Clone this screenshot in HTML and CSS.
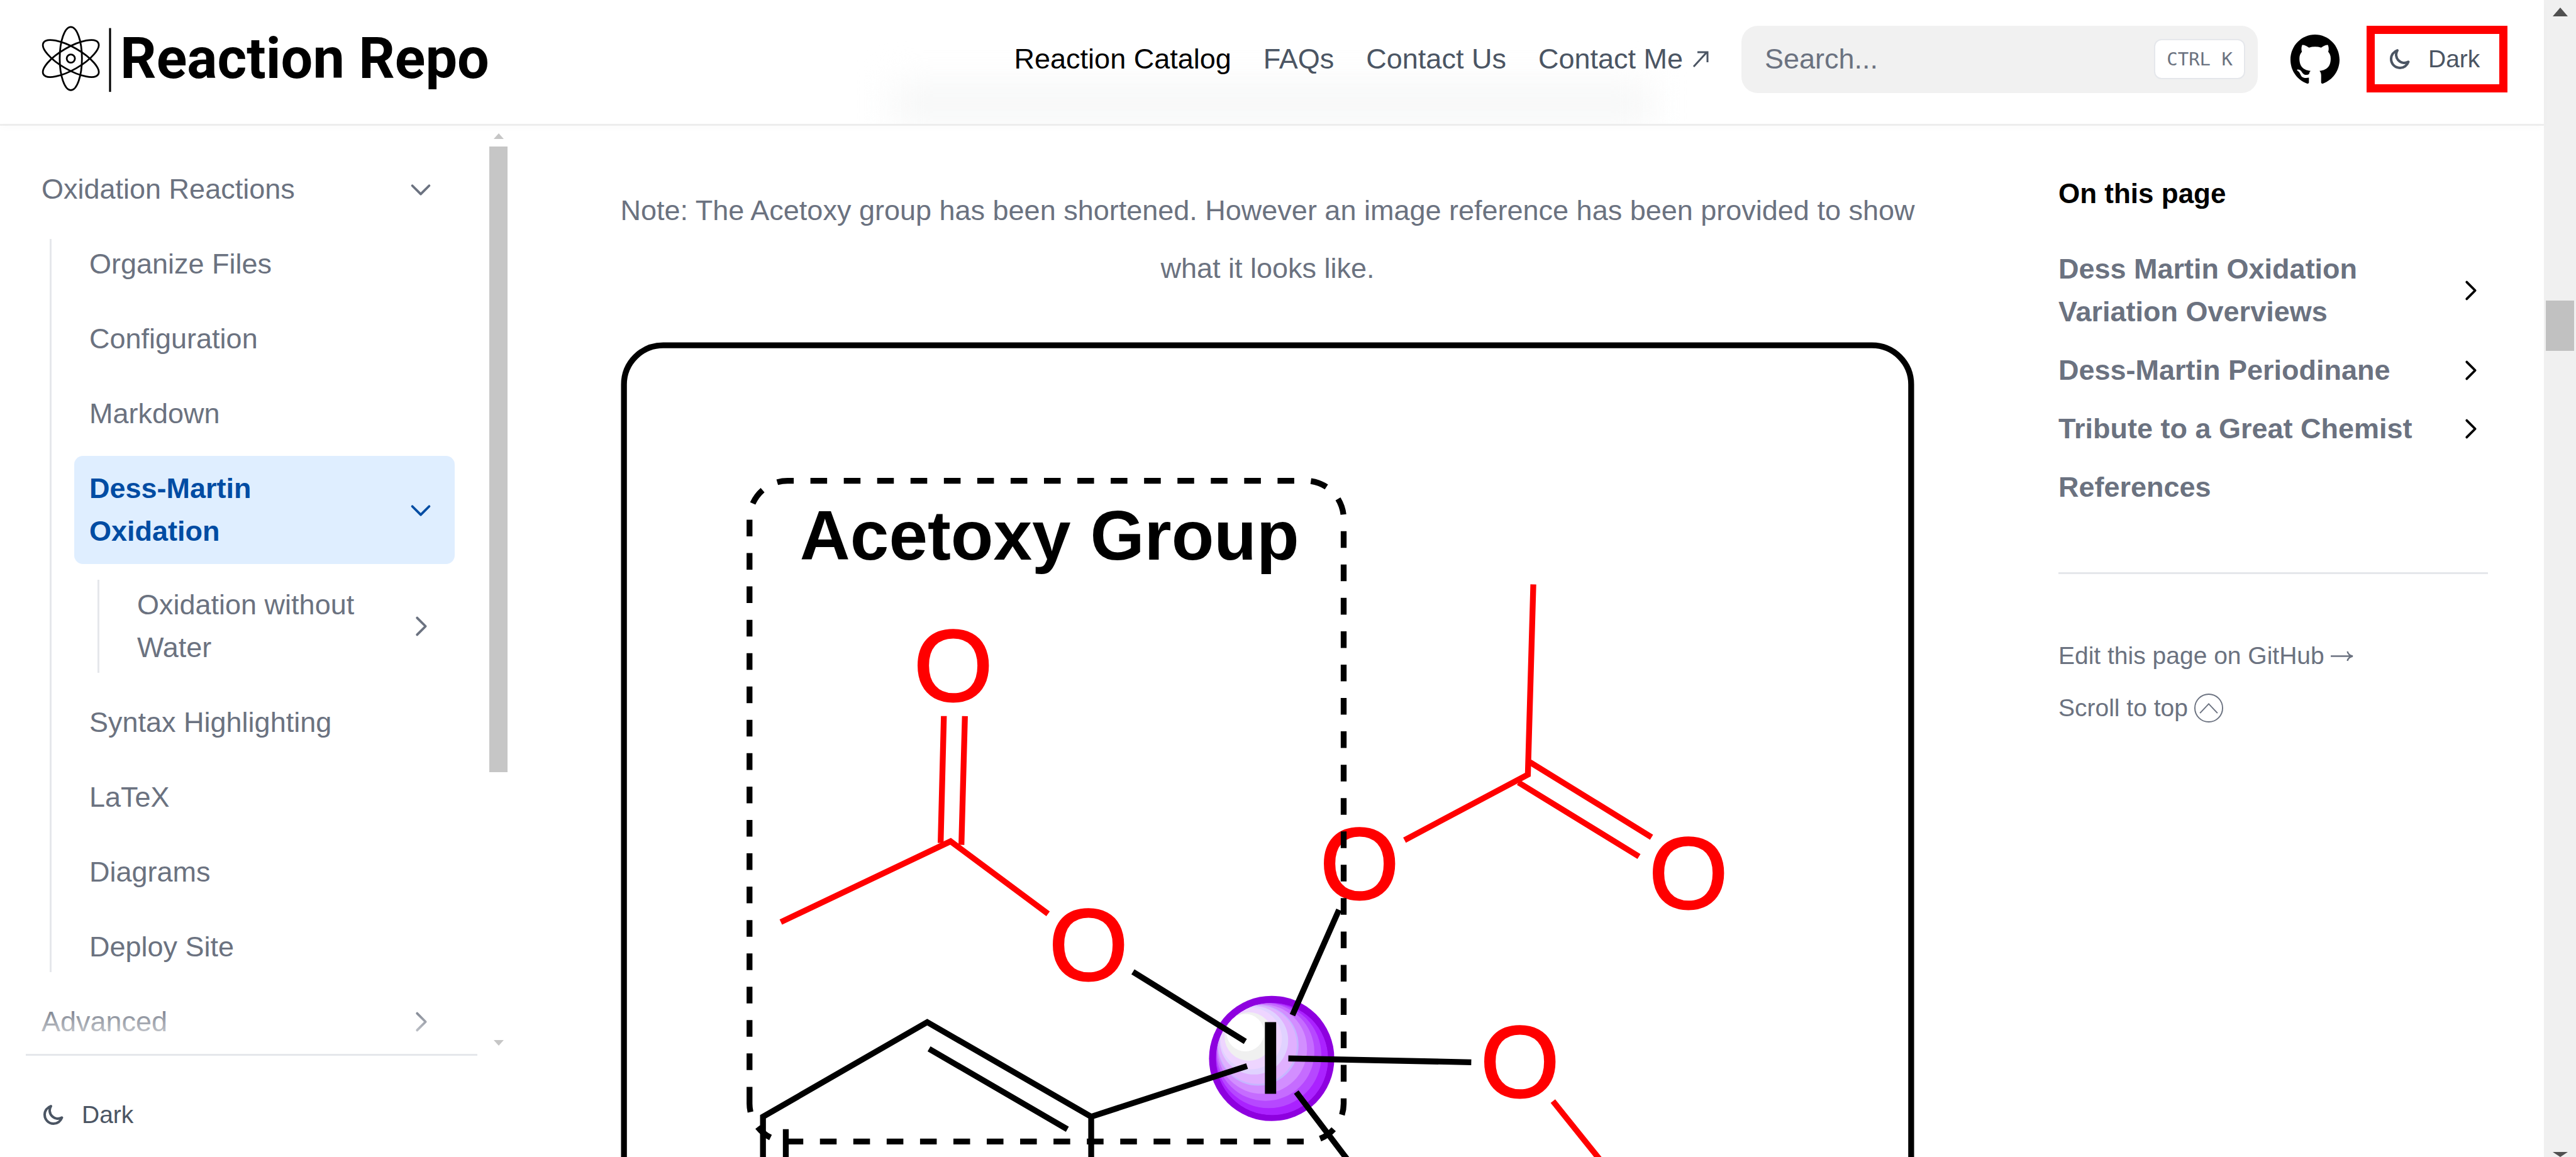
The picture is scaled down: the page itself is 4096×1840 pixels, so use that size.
FILE: index.html
```html
<!DOCTYPE html>
<html lang="en">
<head>
<meta charset="utf-8">
<title>Reaction Repo – Dess-Martin Oxidation</title>
<link rel="stylesheet" href="styles.css">
</head>
<body>
<svg class="sprite" aria-hidden="true">
  <symbol id="chevron" viewBox="0 0 24 24"><path d="M9 5l7 7-7 7" fill="none" stroke="currentColor" stroke-width="2" stroke-linecap="round" stroke-linejoin="round"/></symbol>
  <symbol id="moon" viewBox="3 4 18 18"><path fill="none" stroke="currentColor" stroke-width="2" stroke-linejoin="round" d="M17.715 15.15A6.5 6.5 0 0 1 9 6.035C6.106 6.922 4 9.645 4 12.867c0 3.94 3.153 7.136 7.042 7.136 3.101 0 5.734-2.032 6.673-4.853Z"/></symbol>
</svg>

<div class="page">
  <header class="topbar">
    <a class="logo" href="#">
      <svg class="logo-mark" viewBox="70 45 120 116" fill="none" stroke="#000" aria-hidden="true">
        <g stroke-width="3">
          <ellipse cx="121" cy="102" rx="19" ry="54"/>
          <ellipse cx="121" cy="102" rx="19" ry="54" transform="rotate(60 121 102)"/>
          <ellipse cx="121" cy="102" rx="19" ry="54" transform="rotate(-60 121 102)"/>
          <circle cx="121" cy="102" r="7"/>
        </g>
        <path d="M188 50V159" stroke-width="3.4"/>
      </svg>
      <span>Reaction Repo</span>
    </a>
    <nav class="mainnav">
      <a class="current" href="#">Reaction Catalog</a>
      <a href="#">FAQs</a>
      <a href="#">Contact Us</a>
      <a class="external" href="#">Contact Me<svg viewBox="0 0 26 28" fill="none" stroke="currentColor" stroke-width="3" aria-hidden="true"><path d="M2 26L23 3M8 3H24V19"/></svg></a>
    </nav>
    <label class="search">
      <input type="search" placeholder="Search..." aria-label="Search">
      <kbd>CTRL K</kbd>
    </label>
    <a class="github" href="#" aria-label="GitHub">
      <svg viewBox="3 3 18 18" fill="currentColor"><path d="M12 3C7.0275 3 3 7.12937 3 12.2276C3 16.3109 5.57625 19.7597 9.15374 20.9824C9.60374 21.0631 9.77249 20.7863 9.77249 20.5441C9.77249 20.3249 9.76125 19.5982 9.76125 18.8254C7.5 19.2522 6.915 18.2602 6.735 17.7412C6.63375 17.4759 6.19499 16.6569 5.8125 16.4378C5.4975 16.2647 5.0475 15.838 5.80124 15.8264C6.51 15.8149 7.01625 16.4954 7.18499 16.7723C7.99499 18.1679 9.28875 17.7758 9.80625 17.5335C9.885 16.9337 10.1212 16.53 10.38 16.2993C8.3775 16.0687 6.285 15.2728 6.285 11.7432C6.285 10.7397 6.63375 9.9092 7.20749 9.26326C7.1175 9.03257 6.8025 8.08674 7.2975 6.81794C7.2975 6.81794 8.05125 6.57571 9.77249 7.76377C10.4925 7.55615 11.2575 7.45234 12.0225 7.45234C12.7875 7.45234 13.5525 7.55615 14.2725 7.76377C15.9937 6.56418 16.7475 6.81794 16.7475 6.81794C17.2424 8.08674 16.9275 9.03257 16.8375 9.26326C17.4113 9.9092 17.76 10.7281 17.76 11.7432C17.76 15.2843 15.6563 16.0687 13.6537 16.2993C13.98 16.5877 14.2613 17.1414 14.2613 18.0065C14.2613 19.2407 14.25 20.2326 14.25 20.5441C14.25 20.7863 14.4188 21.0746 14.8688 20.9824C16.6554 20.364 18.2079 19.1866 19.3078 17.6162C20.4077 16.0457 20.9995 14.1611 21 12.2276C21 7.12937 16.9725 3 12 3Z"/></svg>
    </a>
    <button class="theme theme-marked" type="button"><svg aria-hidden="true"><use href="#moon"/></svg>Dark</button>
  </header>

  <div class="columns">
    <aside class="sidebar">
      <div class="sidebar-scroll">
        <nav class="tree">
          <ul>
            <li><button class="item" type="button">Oxidation Reactions<svg class="open" aria-hidden="true"><use href="#chevron"/></svg></button>
              <ul class="sub">
                <li><a class="item" href="#">Organize Files</a></li>
                <li><a class="item" href="#">Configuration</a></li>
                <li><a class="item" href="#">Markdown</a></li>
                <li><a class="item active" href="#">Dess-Martin Oxidation<svg class="open" aria-hidden="true"><use href="#chevron"/></svg></a>
                  <ul class="sub">
                    <li><a class="item" href="#">Oxidation without Water<svg aria-hidden="true"><use href="#chevron"/></svg></a></li>
                  </ul>
                </li>
                <li><a class="item" href="#">Syntax Highlighting</a></li>
                <li><a class="item" href="#">LaTeX</a></li>
                <li><a class="item" href="#">Diagrams</a></li>
                <li><a class="item" href="#">Deploy Site</a></li>
              </ul>
            </li>
            <li><button class="item" type="button">Advanced<svg aria-hidden="true"><use href="#chevron"/></svg></button></li>
          </ul>
        </nav>
        <div class="inner-bar" aria-hidden="true"><i class="up"></i><i class="thumb"></i><i class="down"></i></div>
      </div>
      <div class="sidebar-foot">
        <button class="theme" type="button"><svg aria-hidden="true"><use href="#moon"/></svg>Dark</button>
      </div>
    </aside>

    <main>
      <p>Note: The Acetoxy group has been shortened. However an image reference has been provided to show what it looks like.</p>
      <figure>
        <svg viewBox="1060 584 2210 1500" role="img" aria-label="Dess-Martin periodinane with its acetoxy group outlined">
          <rect x="1065.500" y="589.500" width="2199" height="1800" rx="67" fill="#fff" stroke="#000" stroke-width="10"/>
          <clipPath id="ball"><circle cx="2172.6" cy="1809" r="96"/></clipPath>
          <circle cx="2172" cy="1808" r="107" fill="#8e00df"/>
          <g clip-path="url(#ball)">
            <circle cx="2172.6" cy="1809" r="96" fill="#aa22ff"/>
            <circle cx="2167" cy="1803" r="90" fill="#b648ff"/>
            <circle cx="2161.5" cy="1797" r="83.5" fill="#c56cff"/>
            <circle cx="2156" cy="1792" r="76.5" fill="#d28eff"/>
            <circle cx="2149" cy="1785.5" r="69" fill="#c6b6ff"/>
            <circle cx="2148" cy="1784.5" r="67" fill="#e0b0ff"/>
            <circle cx="2141.7" cy="1777" r="58.5" fill="#e0d2ff"/>
            <circle cx="2137" cy="1774" r="52.5" fill="#eed5ff"/>
            <circle cx="2133" cy="1770.5" r="41.5" fill="#f0f0f0"/>
            <circle cx="2127" cy="1764" r="32" fill="#fff"/>
          </g>
          <g class="atom">
            <text x="1628" y="1196">O</text>
            <text x="1859" y="1673">O</text>
            <text x="2322" y="1535">O</text>
            <text x="2884" y="1551">O</text>
            <text x="2596" y="1873">O</text>
          </g>
          <text class="atom iodine" x="2170" y="1867">I</text>
          <g fill="none" stroke="#f00" stroke-width="10">
            <path d="M1612 1223L1606.5 1440M1648 1223L1642 1443"/>
            <path d="M1333.5 1575L1623.5 1437L1790 1561"/>
            <path d="M2619 998L2609.7 1323L2399 1435"/>
            <path d="M2613 1301.7L2821 1430M2593.6 1336.5L2799.5 1463"/>
            <path d="M2652.5 1881L2810 2077"/>
          </g>
          <g fill="none" stroke="#000" stroke-width="10">
            <path d="M1935 1660L2127 1779M2287 1554L2207.5 1734M2200.5 1808L2513 1814.5M2214 1865.5L2392 2100"/>
            <path d="M1303 2100V1907.5L1583.6 1746L1863.7 1907.5V2100M1863.7 1907.5L2130 1821"/>
            <path d="M1586.7 1791.6L1823 1929M1342 1929V2100"/>
            <path stroke-dasharray="28.5 28.5" d="M1280 1885V886A65 65 0 0 1 1345 821H2230A65 65 0 0 1 2295 886V1885A65 65 0 0 1 2230 1950H1345A65 65 0 0 1 1280 1885"/>
          </g>
          <text class="caption" x="1366" y="956">Acetoxy Group</text>
        </svg>
      </figure>
    </main>

    <aside class="toc">
      <h2>On this page</h2>
      <ul>
        <li><a href="#">Dess Martin Oxidation Variation Overviews</a><svg aria-hidden="true"><use href="#chevron"/></svg></li>
        <li><a href="#">Dess-Martin Periodinane</a><svg aria-hidden="true"><use href="#chevron"/></svg></li>
        <li><a href="#">Tribute to a Great Chemist</a><svg aria-hidden="true"><use href="#chevron"/></svg></li>
        <li><a href="#">References</a></li>
      </ul>
      <div class="toc-foot">
        <a class="edit" href="#">Edit this page on GitHub<svg viewBox="0 0 38 18" fill="none" stroke="currentColor" stroke-width="2.500" aria-hidden="true"><path d="M0 9H36M28 1C29 5 32 8 37 9C32 10 29 13 28 17"/></svg></a>
        <button type="button">Scroll to top<svg viewBox="0 0 48 48" fill="none" stroke="currentColor" stroke-width="2" aria-hidden="true"><circle cx="24" cy="24" r="23"/><path d="M9.500 32.500L24 17L38.500 32.500"/></svg></button>
      </div>
    </aside>
  </div>
</div>
<div class="page-bar" aria-hidden="true"><i class="up"></i><i class="thumb"></i><i class="down"></i></div>
</body>
</html>
```
FILE: styles.css
```css
* { box-sizing: border-box; }

body {
  margin: 0;
  display: flex;
  height: 100vh;
  overflow: hidden;
  background: #fff;
  color: #6b7280;
  font-family: "Liberation Sans", Arial, sans-serif;
  font-size: 45px;
  line-height: 68px;
}

a { color: inherit; text-decoration: none; }
button { border: 0; padding: 0; background: none; color: inherit; font: inherit; text-align: left; cursor: pointer; }
ul { list-style: none; margin: 0; padding: 0; }
svg { flex: none; }
.sprite { position: absolute; width: 0; height: 0; }

.page { flex: 1; min-width: 0; display: flex; flex-direction: column; }

/* Top bar */
.topbar {
  position: relative;
  z-index: 1;
  flex: none;
  display: flex;
  align-items: center;
  height: 197px;
  padding: 0 58px 9px 65px;
  overflow: hidden;
  background: #fff;
  color: #4b5563;
  box-shadow: 0 6px 12px rgba(0, 0, 0, .02), 0 3px 0 rgba(0, 0, 0, .06);
}
/* heading scrolled behind the frosted bar */
.topbar::before {
  content: "";
  position: absolute;
  z-index: -1;
  left: 35%;
  right: 35%;
  bottom: 0;
  height: 64px;
  background: #f6f7f7;
  filter: blur(28px);
}
.logo {
  display: flex;
  align-items: center;
  gap: 14px;
  margin-right: auto;
  color: #000;
  font: 700 90px/108px Roboto, sans-serif;
}
.logo-mark { width: 112px; height: 108px; }
.mainnav { display: flex; gap: 51px; margin-right: 52px; }
.mainnav .current { color: #000; }
.external { display: flex; align-items: center; gap: 15px; }
.external svg { width: 26px; height: 28px; }

.search {
  display: flex;
  align-items: center;
  width: 821px;
  height: 107px;
  margin-right: 52px;
  padding: 0 20px 0 37px;
  border-radius: 26px;
  background: #f1f1f1;
}
.search input {
  flex: 1;
  min-width: 0;
  border: 0;
  padding: 0;
  background: none;
  color: #6b7280;
  font: inherit;
  outline: none;
}
.search input::placeholder { color: #6b7280; opacity: 1; }
.search kbd {
  height: 64px;
  padding: 0 18px;
  border: 2px solid #e5e7eb;
  border-radius: 12px;
  background: #fff;
  color: #6b7280;
  font: 29px/60px "DejaVu Sans Mono", monospace;
}
.github { margin-right: 43px; color: #000; }
.github svg { display: block; width: 78px; height: 78px; }

.theme { display: flex; align-items: center; gap: 25px; color: #4b5563; font-size: 39px; }
.theme svg { width: 36px; height: 36px; }
.theme-marked { width: 224px; height: 106px; padding-left: 24px; border: 13px solid #f00; }

.columns { flex: 1; min-height: 0; display: flex; overflow: hidden; }

/* Sidebar */
.sidebar { flex: none; width: 807px; display: flex; flex-direction: column; }
.sidebar-scroll { position: relative; flex: 1; min-height: 0; display: flex; justify-content: space-between; overflow: hidden; }
.sidebar-scroll::after {
  content: "";
  position: absolute;
  left: 0;
  right: 48px;
  bottom: 0;
  height: 80px;
  background: linear-gradient(to top, #fff, rgba(255, 255, 255, 0));
}
.tree { width: 723px; padding: 52px 0 0 42px; }
.tree li + li { margin-top: 15px; }
.item {
  display: flex;
  align-items: center;
  justify-content: space-between;
  width: 100%;
  padding: 18px 31px 18px 24px;
  border-radius: 14px;
}
.item svg { width: 46px; height: 46px; }
.item svg.open { transform: rotate(90deg); }
.item.active { background: #dfeeff; color: #004ca3; font-weight: 700; }
.item.active svg { margin-left: 200px; }
.sub { position: relative; margin-top: 15px; padding-left: 76px; }
.sub .sub { margin: 13px 0 15px; }
.sub::before {
  content: "";
  position: absolute;
  left: 37px;
  top: 12px;
  bottom: 12px;
  width: 3px;
  background: #e5e7eb;
}
.sidebar-foot { flex: none; height: 164px; margin: 0 48px 0 41px; padding: 60px 28px 0; border-top: 3px solid #e5e7eb; }

/* Scrollbars */
.inner-bar, .page-bar { flex: none; display: flex; flex-direction: column; align-items: center; overflow: hidden; }
.inner-bar { width: 29px; padding: 15px 0 13px; color: #c6c6c6; }
.up, .down { flex: none; width: 0; height: 0; border: solid transparent; }
.inner-bar .up { border-width: 0 8px 9px; border-bottom-color: currentColor; }
.inner-bar .down { margin-top: auto; border-width: 9px 8px 0; border-top-color: currentColor; }
.inner-bar .thumb { width: 100%; height: 68.6%; margin-top: 12px; background: #c6c6c6; }
.page-bar { width: 51px; padding-top: 12px; background: #f0f0f0; color: #505050; }
.page-bar .up { border-width: 0 12px 14px; border-bottom-color: currentColor; }
.page-bar .thumb { width: 45px; height: 80px; margin-top: 452px; background: #c1c1c1; }
.page-bar .down { margin-top: auto; border-width: 8px 12px 0; border-top-color: currentColor; }

/* Article */
main { flex: 1; min-width: 0; padding: 92px 213px 0 164px; overflow: hidden; }
main p { margin: 0 0 71px; line-height: 92px; text-align: center; }
figure { margin: 0 16px; }
figure svg { display: block; width: 100%; }
.atom { fill: #f00; stroke: #f00; stroke-width: 3px; font: 174px "Liberation Sans", Arial, sans-serif; text-anchor: middle; }
.iodine { fill: #000; stroke: #000; }
.caption { fill: #000; font: 700 119px "Liberation Sans", Arial, sans-serif; }

/* On this page */
.toc { flex: none; width: 772px; padding: 77px 89px 0 0; }
.toc h2 { margin: 0 0 52px; color: #000; font-size: 44px; line-height: 68px; }
.toc li { display: flex; align-items: center; justify-content: space-between; padding-right: 5px; font-weight: 700; }
.toc li + li { margin-top: 25px; }
.toc li a { max-width: 590px; }
.toc li svg { width: 46px; height: 46px; color: #000; }
.toc-foot {
  display: flex;
  flex-direction: column;
  align-items: flex-start;
  gap: 27px;
  margin-top: 101px;
  padding-top: 102px;
  border-top: 3px solid #e5e7eb;
  font-size: 39px;
  line-height: 56px;
}
.toc-foot button, .edit { display: flex; align-items: center; gap: 10px; }
.toc-foot svg { width: 46px; height: 46px; }
.toc-foot .edit svg { width: 36px; height: 17px; }
```
